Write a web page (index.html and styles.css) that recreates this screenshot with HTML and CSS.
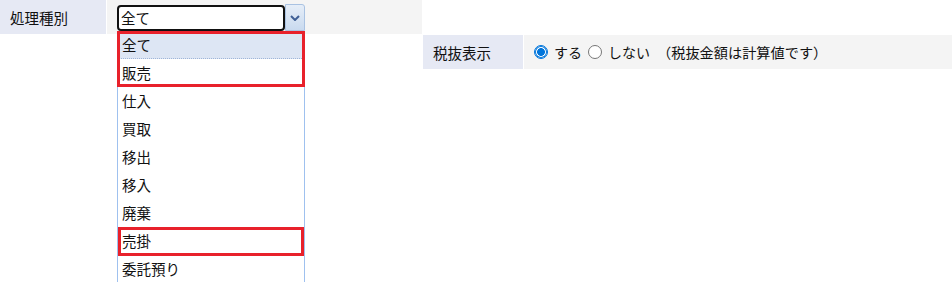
FILE: index.html
```html
<!DOCTYPE html>
<html lang="ja">
<head>
<meta charset="utf-8">
<link rel="stylesheet" href="styles.css">
</head>
<body>
<div class="page">
  <div class="grid">
    <div class="cell">
      <div class="label">処理種別</div>
      <div class="value">
        <div class="select">
          <div class="select-text">全て</div>
          <div class="select-btn">
            <svg width="10" height="6" viewBox="0 0 10 6"><path d="M1 1 L5 5 L9 1" fill="none" stroke="#3f5f95" stroke-width="2"/></svg>
          </div>
        </div>
      </div>
    </div>
    <div class="empty"></div>
    <div class="empty"></div>
    <div class="cell">
      <div class="label tax-label">税抜表示</div>
      <div class="value tax-value">
        <span class="radio checked"></span><span class="rtext">する</span>
        <span class="radio"></span><span class="rtext">しない</span>
        <span class="note">（税抜金額は計算値です）</span>
      </div>
    </div>
  </div>

  <ul class="dropdown">
    <li class="item active">全て</li>
    <li class="item">販売</li>
    <li class="item">仕入</li>
    <li class="item">買取</li>
    <li class="item">移出</li>
    <li class="item">移入</li>
    <li class="item">廃棄</li>
    <li class="item">売掛</li>
    <li class="item">委託預り</li>
  </ul>
  <div class="mark mark-a"></div>
  <div class="mark mark-b"></div>
</div>
</body>
</html>
```

FILE: styles.css
```css
html, body {
  margin: 0;
  padding: 0;
  background: #fff;
}
body {
  font-family: "Noto Sans CJK JP", "Noto Sans", sans-serif;
  font-size: 14px;
  color: #111;
}
.page {
  position: relative;
  width: 952px;
  height: 282px;
  overflow: hidden;
}
.grid {
  display: grid;
  grid-template-columns: 422px 529px;
  grid-template-rows: 34px 34px;
  column-gap: 1px;
  row-gap: 1px;
}
.cell {
  display: flex;
  gap: 1px;
}
.label {
  width: 96px;
  padding-left: 10px;
  background: #e6e9f4;
  display: flex;
  align-items: center;
  font-size: 14.5px;
}
.value {
  flex: 1;
  background: #f4f4f4;
  display: flex;
  align-items: center;
  padding-left: 10px;
}
.tax-label {
  width: 90px;
}
.tax-value {
  padding-left: 10px;
}
.select {
  display: flex;
  height: 27px;
  margin-top: 1px;
}
.select-text {
  width: 162px;
  height: 22px;
  border: 2px solid #111;
  border-radius: 4px;
  background: #fff;
  padding-left: 2px;
  line-height: 22px;
  margin-top: 1px;
  font-size: 14.5px;
}
.select-btn {
  width: 18px;
  height: 25px;
  border: 1px solid #a9c2e2;
  border-radius: 0 3px 0 0;
  background: linear-gradient(#e6eef8, #c9daef);
  display: flex;
  align-items: center;
  justify-content: center;
}
.radio {
  width: 12px;
  height: 12px;
  border: 1px solid #767676;
  border-radius: 50%;
  background: #fff;
  display: inline-block;
  margin-right: 6px;
  box-sizing: content-box;
}
.radio.checked {
  border: 1px solid #0075db;
  background: radial-gradient(circle, #0075db 0 3.6px, #fff 4.2px 100%);
  box-shadow: inset 0 0 0 1px #0075db;
}
.rtext {
  margin-right: 6px;
}
.note {
  margin-left: 1px;
  font-size: 14.2px;
}
.dropdown {
  position: absolute;
  left: 117px;
  top: 31px;
  width: 186px;
  margin: 0;
  padding: 0;
  list-style: none;
  border: 1px solid #9fc1ef;
  border-top: none;
  background: #fff;
  font-size: 14.5px;
}
.item {
  height: 28px;
  line-height: 28px;
  padding-left: 4px;
}
.item.active {
  background: #dde6f4;
  height: 27px;
  border-bottom: 1px dotted #9fb6d9;
}
.mark {
  position: absolute;
  border: 3px solid #e8212b;
}
.mark-a {
  left: 117px;
  top: 31px;
  width: 182px;
  height: 50px;
}
.mark-b {
  left: 118px;
  top: 227px;
  width: 180px;
  height: 23px;
}
```
